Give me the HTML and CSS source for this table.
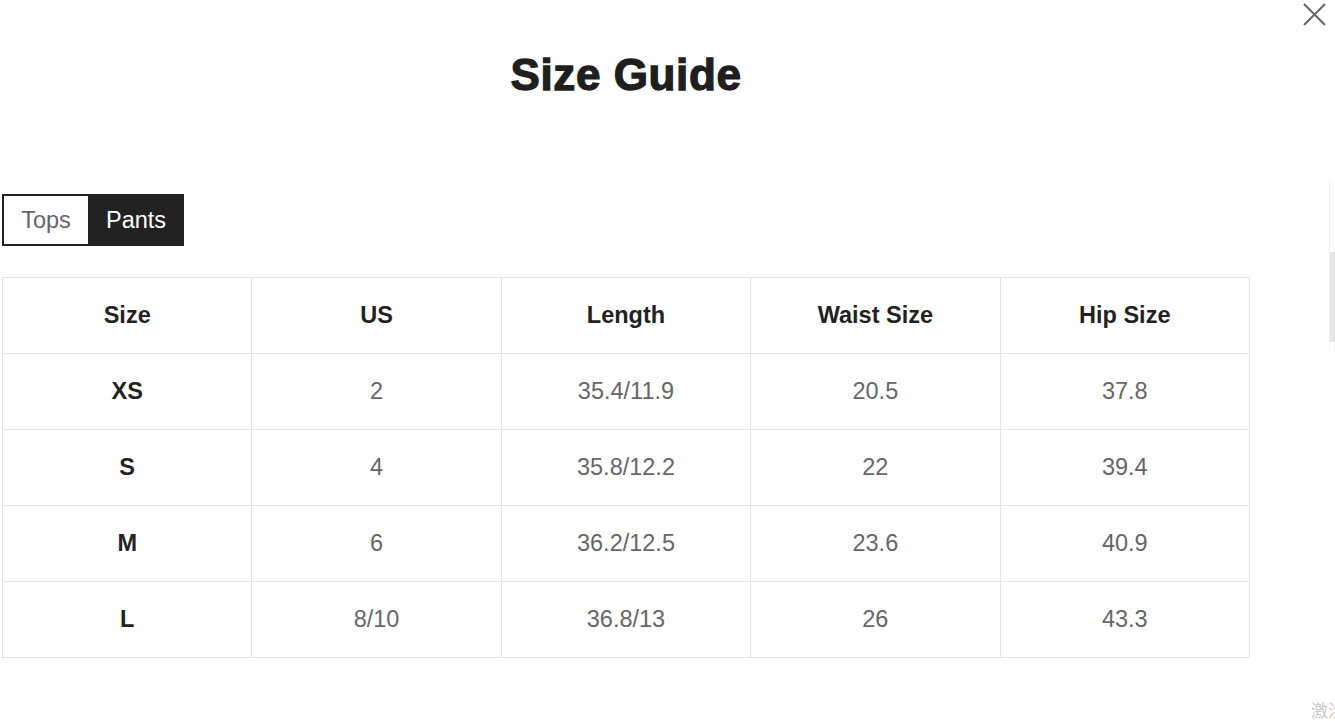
FILE: index.html
```html
<!DOCTYPE html>
<html>
<head>
<meta charset="utf-8">
<link rel="stylesheet" href="styles.css">
</head>
<body>
<div class="modal">
  <button class="close" aria-label="close">
    <svg width="24" height="24" viewBox="0 0 24 24"><path d="M2 2 L23 23 M23 2 L2 23" stroke="#666" stroke-width="2" fill="none"/></svg>
  </button>
  <h1 class="title">Size Guide</h1>
  <div class="tabs">
    <span class="tab">Tops</span>
    <span class="tab active">Pants</span>
  </div>
  <table class="sizes">
    <thead>
      <tr><th>Size</th><th>US</th><th>Length</th><th>Waist Size</th><th>Hip Size</th></tr>
    </thead>
    <tbody>
      <tr><th>XS</th><td>2</td><td>35.4/11.9</td><td>20.5</td><td>37.8</td></tr>
      <tr><th>S</th><td>4</td><td>35.8/12.2</td><td>22</td><td>39.4</td></tr>
      <tr><th>M</th><td>6</td><td>36.2/12.5</td><td>23.6</td><td>40.9</td></tr>
      <tr><th>L</th><td>8/10</td><td>36.8/13</td><td>26</td><td>43.3</td></tr>
    </tbody>
  </table>
  <div class="scrollbar"><div class="thumb"></div></div>
  <div class="watermark">激活</div>
</div>
</body>
</html>
```
FILE: styles.css
```css
html, body {
  margin: 0;
  padding: 0;
  background: #fff;
  overflow: hidden;
}
body {
  font-family: "Liberation Sans", Arial, sans-serif;
  color: #222;
  width: 1335px;
  height: 721px;
}
.modal {
  position: relative;
  width: 1335px;
  height: 721px;
  padding: 53px 0 0 2px;
  box-sizing: border-box;
}
.close {
  position: absolute;
  top: 2px;
  right: 9px;
  width: 24px;
  height: 24px;
  padding: 0;
  border: 0;
  background: none;
}
.close svg { display: block; }
.title {
  width: 1248px;
  margin: 0;
  text-align: center;
  font-size: 44px;
  line-height: 44px;
  font-weight: bold;
  letter-spacing: 0.6px;
  color: #1f1f1f;
  -webkit-text-stroke: 1.3px #1f1f1f;
}
.tabs {
  display: flex;
  margin-top: 97px;
  height: 52px;
}
.tab {
  display: block;
  box-sizing: border-box;
  height: 52px;
  line-height: 48px;
  font-size: 23.5px;
  color: #666;
  border: 2px solid #222;
  text-align: center;
}
.tab:first-child {
  width: 86px;
  border-right: 0;
}
.tab.active {
  width: 96px;
  background: #222;
  color: #fff;
}
.sizes {
  margin-top: 31px;
  width: 1248px;
  border-collapse: collapse;
  table-layout: fixed;
}
.sizes th, .sizes td {
  border: 1px solid #e3e3e3;
  height: 75px;
  padding: 0;
  text-align: center;
  font-size: 23.5px;
}
.sizes th {
  font-weight: bold;
  color: #222;
}
.sizes td {
  color: #666;
}
.scrollbar {
  position: absolute;
  right: 0;
  top: 180px;
  width: 5px;
  height: 170px;
  border-left: 1px solid #f0f2f8;
}
.thumb {
  margin-top: 72px;
  height: 90px;
  background: #e6e6e6;
}
.watermark {
  position: absolute;
  left: 1311px;
  top: 697px;
  font-family: "Noto Sans CJK SC", sans-serif;
  font-size: 17px;
  color: #c8c8c8;
  white-space: nowrap;
}
```
